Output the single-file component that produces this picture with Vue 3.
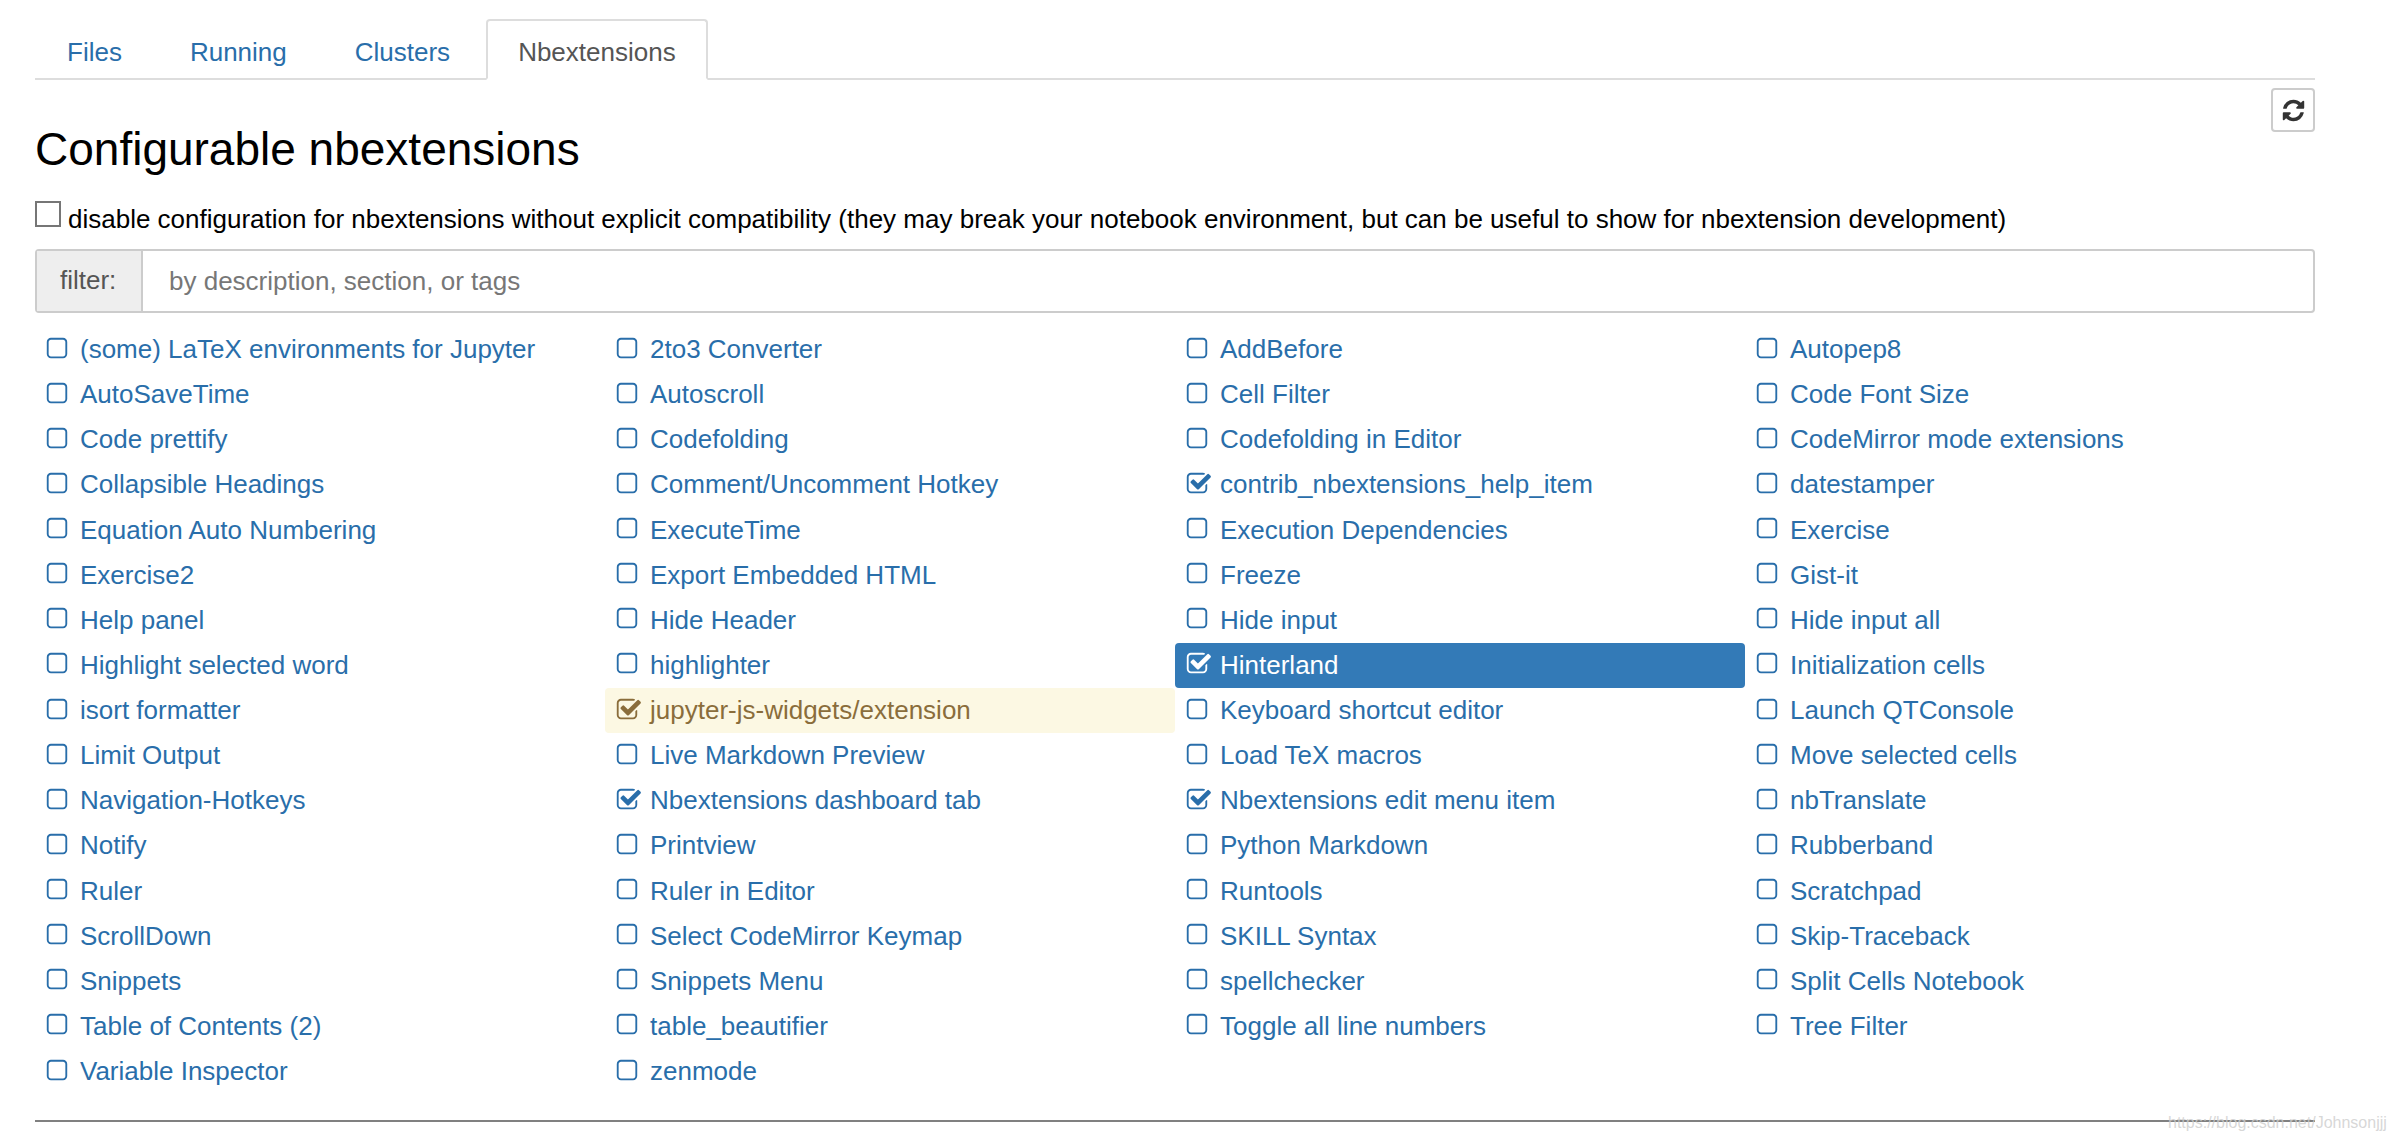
<script setup>
const tabs = ['Files', 'Running', 'Clusters']

const names = [
  '(some) LaTeX environments for Jupyter', '2to3 Converter', 'AddBefore', 'Autopep8',
  'AutoSaveTime', 'Autoscroll', 'Cell Filter', 'Code Font Size',
  'Code prettify', 'Codefolding', 'Codefolding in Editor', 'CodeMirror mode extensions',
  'Collapsible Headings', 'Comment/Uncomment Hotkey', 'contrib_nbextensions_help_item', 'datestamper',
  'Equation Auto Numbering', 'ExecuteTime', 'Execution Dependencies', 'Exercise',
  'Exercise2', 'Export Embedded HTML', 'Freeze', 'Gist-it',
  'Help panel', 'Hide Header', 'Hide input', 'Hide input all',
  'Highlight selected word', 'highlighter', 'Hinterland', 'Initialization cells',
  'isort formatter', 'jupyter-js-widgets/extension', 'Keyboard shortcut editor', 'Launch QTConsole',
  'Limit Output', 'Live Markdown Preview', 'Load TeX macros', 'Move selected cells',
  'Navigation-Hotkeys', 'Nbextensions dashboard tab', 'Nbextensions edit menu item', 'nbTranslate',
  'Notify', 'Printview', 'Python Markdown', 'Rubberband',
  'Ruler', 'Ruler in Editor', 'Runtools', 'Scratchpad',
  'ScrollDown', 'Select CodeMirror Keymap', 'SKILL Syntax', 'Skip-Traceback',
  'Snippets', 'Snippets Menu', 'spellchecker', 'Split Cells Notebook',
  'Table of Contents (2)', 'table_beautifier', 'Toggle all line numbers', 'Tree Filter',
  'Variable Inspector', 'zenmode'
]
const checked = new Set([
  'contrib_nbextensions_help_item', 'Hinterland', 'jupyter-js-widgets/extension',
  'Nbextensions dashboard tab', 'Nbextensions edit menu item'
])
const extensions = names.map((name) => ({
  name,
  checked: checked.has(name),
  state: name === 'Hinterland' ? 'active' : name === 'jupyter-js-widgets/extension' ? 'warning' : ''
}))

const squarePath = 'M1312 256h-832q-66 0-113 47t-47 113v832q0 66 47 113t113 47h832q66 0 113-47t47-113v-832q0-66-47-113t-113-47zm288 160v832q0 119-84.5 203.5t-203.5 84.5h-832q-119 0-203.5-84.5t-84.5-203.5v-832q0-119 84.5-203.5t203.5-84.5h832q119 0 203.5 84.5t84.5 203.5z'
const checkPath = 'M1472 930v318q0 119-84.5 203.5t-203.5 84.5h-832q-119 0-203.5-84.5t-84.5-203.5v-832q0-119 84.5-203.5t203.5-84.5h832q63 0 117 25 15 7 18 23 3 17-9 29l-49 49q-10 10-23 10-3 0-9-2-23-6-45-6h-832q-66 0-113 47t-47 113v832q0 66 47 113t113 47h832q66 0 113-47t47-113v-254q0-13 9-22l64-64q10-10 23-10 6 0 12 3 20 8 20 29zm231-489l-814 814q-24 24-57 24t-57-24l-430-430q-24-24-24-57t24-57l110-110q24-24 57-24t57 24l263 263 647-647q24-24 57-24t57 24l110 110q24 24 24 57t-24 57z'
const refreshPath = 'M1639 1056q0 5-1 7-64 268-268 434.5t-478 166.5q-146 0-282.5-55t-243.5-157l-129 129q-19 19-45 19t-45-19-19-45v-448q0-26 19-45t45-19h448q26 0 45 19t19 45-19 45l-137 137q71 66 161 102t187 36q134 0 250-65t186-179q11-17 53-117 8-23 30-23h192q13 0 22.5 9.5t9.5 22.5zm25-800v448q0 26-19 45t-45 19h-448q-26 0-45-19t-19-45 19-45l138-138q-148-137-349-137-134 0-250 65t-186 179q-11 17-53 117-8 23-30 23h-199q-13 0-22.5-9.5t-9.5-22.5v-7q65-268 270-434.5t480-166.5q146 0 284 55.5t245 156.5l130-129q19-19 45-19t45 19 19 45z'
</script>

<template>
  <div class="page">
    <ul class="tabs">
      <li v-for="tab in tabs" :key="tab" class="tab">{{ tab }}</li>
      <li class="tab tab-active">Nbextensions</li>
    </ul>

    <div class="toolbar">
      <button class="refresh" type="button" aria-label="Refresh">
        <svg class="refresh-icon" viewBox="0 0 1792 1792"><path :d="refreshPath" /></svg>
      </button>
    </div>

    <h3 class="title">Configurable nbextensions</h3>

    <label class="compat">
      <input class="compat-box" type="checkbox" />
      <span>disable configuration for nbextensions without explicit compatibility (they may break your notebook environment, but can be useful to show for nbextension development)</span>
    </label>

    <div class="filter">
      <span class="filter-label">filter:</span>
      <input class="filter-input" type="text" placeholder="by description, section, or tags" />
    </div>

    <ul class="list">
      <li v-for="ext in extensions" :key="ext.name" class="item" :class="ext.state">
        <svg class="check" :viewBox="ext.checked ? '-128 0 1792 1792' : '0 0 1792 1792'"><path :d="ext.checked ? checkPath : squarePath" /></svg>
        <span>{{ ext.name }}</span>
      </li>
    </ul>

    <hr class="rule" />
    <span class="watermark">https://blog.csdn.net/Johnsonjjj</span>
  </div>
</template>

<style>
html, body { margin: 0; background: #fff; }
</style>

<style scoped>
.page {
  position: relative;
  box-sizing: border-box;
  width: 2394px;
  height: 1140px;
  padding: 19px 79px 0 35px;
  overflow: hidden;
  font-family: "Liberation Sans", Arial, sans-serif;
  font-size: 26px;
  color: #000;
}
.tabs {
  display: flex;
  gap: 4px;
  height: 61px;
  margin: 0;
  padding: 0;
  box-sizing: border-box;
  list-style: none;
  border-bottom: 2px solid #ddd;
}
.tab {
  box-sizing: border-box;
  height: 61px;
  padding: 0 30px;
  line-height: 62px;
  color: #296eaa;
  border: 2px solid transparent;
  border-radius: 4px 4px 0 0;
}
.tab-active {
  color: #555;
  background: #fff;
  border-color: #ddd #ddd #fff;
}
.toolbar {
  display: flex;
  justify-content: flex-end;
  height: 38px;
  margin-top: 8px;
}
.refresh {
  display: flex;
  align-items: center;
  justify-content: center;
  flex: none;
  box-sizing: border-box;
  width: 44px;
  height: 44px;
  padding: 0;
  background: #fff;
  border: 2px solid #ccc;
  border-radius: 4px;
}
.refresh-icon { width: 25px; height: 25px; fill: #333; }
.title {
  margin: 0;
  height: 75px;
  font-size: 46px;
  font-weight: 400;
  line-height: 46px;
}
.compat {
  display: flex;
  align-items: flex-start;
  height: 48px;
  line-height: 36px;
}
.compat-box {
  appearance: none;
  box-sizing: border-box;
  width: 26px;
  height: 26px;
  margin: 0 7px 0 0;
  background: #fff;
  border: 2px solid #767676;
}
.filter {
  display: flex;
  box-sizing: border-box;
  height: 64px;
  background: #fff;
  border: 2px solid #ccc;
  border-radius: 4px;
}
.filter-label {
  box-sizing: border-box;
  width: 106px;
  padding-left: 23px;
  line-height: 59px;
  color: #555;
  background: #eee;
  border-right: 2px solid #ccc;
}
.filter-input {
  flex: 1;
  min-width: 0;
  padding: 0 26px;
  font: inherit;
  color: #555;
  border: 0;
  background: transparent;
  outline: none;
}
.filter-input::placeholder { color: #777; opacity: 1; }
.list {
  display: grid;
  grid-template-columns: repeat(4, 570px);
  grid-auto-rows: 45.125px;
  margin: 14px 0 0;
  padding: 0;
  list-style: none;
}
.item {
  display: flex;
  align-items: center;
  gap: 10px;
  padding-left: 9px;
  color: #296eaa;
  border-radius: 4px;
}
.check {
  flex: none;
  width: 26px;
  height: 26px;
  margin-bottom: 2px;
  overflow: visible;
  fill: currentColor;
}
.item.active { color: #fff; background: #337ab7; }
.item.warning { color: #8a6d3b; background: #fcf8e3; }
.rule {
  height: 2px;
  margin: 26px 0 0;
  background: #808080;
  border: 0;
}
.watermark {
  position: absolute;
  left: 2168px;
  top: 1114px;
  font-size: 16px;
  color: rgba(205, 205, 205, 0.8);
  white-space: nowrap;
}
</style>
